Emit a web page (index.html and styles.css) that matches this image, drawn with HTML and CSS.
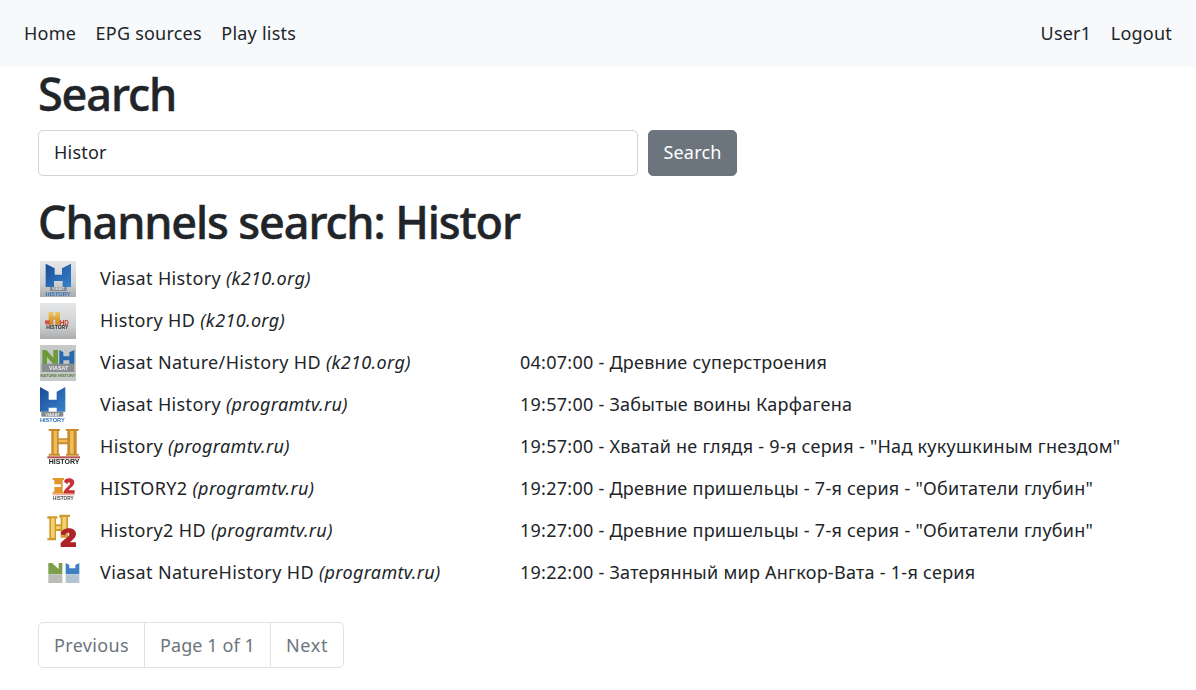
FILE: index.html
```html
<!DOCTYPE html>
<html lang="en">

<head>
    <meta charset="utf-8">
    <title>Channels search</title>
    <link rel="stylesheet" href="styles.css">
</head>

<body>
    <nav class="navbar">
        <div class="nav-group">
            <a class="nav-link" href="#">Home</a>
            <a class="nav-link" href="#">EPG sources</a>
            <a class="nav-link" href="#">Play lists</a>
        </div>
        <div class="nav-group">
            <a class="nav-link" href="#">User1</a>
            <a class="nav-link" href="#">Logout</a>
        </div>
    </nav>

    <main class="container">
        <h1 class="title">Search</h1>
        <form class="search-form">
            <input class="search-input" type="text" value="Histor">
            <button class="search-btn" type="button">Search</button>
        </form>

        <h1 class="title results-title">Channels search: Histor</h1>

        <div class="channels">
            <div class="channel">
                <svg class="logo" viewBox="0 0 132 108">
                    <defs>
                        <linearGradient id="tile" x1="0" y1="0" x2="0" y2="1">
                            <stop offset="0" stop-color="#e6e7e8"/>
                            <stop offset="0.6" stop-color="#d0d1d2"/>
                            <stop offset="1" stop-color="#a9abac"/>
                        </linearGradient>
                        <linearGradient id="blue" x1="0" y1="0" x2="1" y2="1">
                            <stop offset="0" stop-color="#1b4a97"/>
                            <stop offset="1" stop-color="#3583cb"/>
                        </linearGradient>
                        <linearGradient id="gold" x1="0" y1="0" x2="0" y2="1">
                            <stop offset="0" stop-color="#f3c65c"/>
                            <stop offset="1" stop-color="#c98427"/>
                        </linearGradient>
                    </defs>
                    <rect width="108" height="108" fill="url(#tile)"/>
                    <path d="M17 8 L44 22 V41 H66 V22 L93 8 V78 H68 V60 H42 V78 H17 Z" fill="url(#blue)"/>
                    <rect x="30" y="78" width="50" height="12" fill="#85888d"/>
                    <text x="55" y="88" class="logo-text" font-size="10" fill="#e8e8e8">VIASAT</text>
                    <text x="54" y="104" class="logo-text" font-size="17" fill="#2f6fb5">HISTORY</text>
                </svg>
                <div class="channel-name">Viasat History <em>(k210.org)</em></div>
                <div class="channel-now"></div>
            </div>
            <div class="channel">
                <svg class="logo" viewBox="0 0 132 108">
                    <rect width="108" height="108" fill="url(#tile)"/>
                    <path d="M26 27 H40 V40 H46 V27 H60 V65 H46 V50 H40 V65 H26 Z" fill="url(#gold)"/>
                    <rect x="15" y="52" width="14" height="12" fill="#d0564a"/>
                    <text x="73" y="65" class="logo-text" font-size="19" fill="#c9352c">HD</text>
                    <text x="52" y="78" class="logo-text" font-size="15" fill="#2a2a2a">HISTORY</text>
                </svg>
                <div class="channel-name">History HD <em>(k210.org)</em></div>
                <div class="channel-now"></div>
            </div>
            <div class="channel">
                <svg class="logo" viewBox="0 0 132 108">
                    <rect width="108" height="108" fill="#c5c9c8"/>
                    <path d="M7 15 H19 L40 38 V15 H54 V58 H40 L21 36 V58 H7 Z" fill="#6d9a3a"/>
                    <path d="M58 15 L70 22 V34 H88 V22 L103 15 V58 H88 V46 H70 V58 H58 Z" fill="#2868ae"/>
                    <rect x="5" y="56" width="98" height="25" fill="#8b8f92"/>
                    <text x="56" y="74" class="logo-text" font-size="16" fill="#eeeeee">VIASAT</text>
                    <text x="54" y="96" class="logo-text" font-size="12" fill="#56783a">NATURE HISTORY</text>
                </svg>
                <div class="channel-name">Viasat Nature/History HD <em>(k210.org)</em></div>
                <div class="channel-now">04:07:00 - Древние суперстроения</div>
            </div>
            <div class="channel">
                <svg class="logo" viewBox="0 0 132 108">
                    <path d="M0 0 L26 14 V38 H50 V14 L76 0 V74 H50 V62 H26 V74 H0 Z" fill="url(#blue)"/>
                    <rect x="4" y="74" width="66" height="15" fill="#85888d"/>
                    <text x="37" y="86" class="logo-text" font-size="12" fill="#eeeeee">VIASAT</text>
                    <text x="37" y="105" class="logo-text" font-size="17" fill="#2f6fb5">HISTORY</text>
                </svg>
                <div class="channel-name">Viasat History <em>(programtv.ru)</em></div>
                <div class="channel-now">19:57:00 - Забытые воины Карфагена</div>
            </div>
            <div class="channel">
                <svg class="logo" viewBox="0 0 132 108">
                    <path d="M26 0 H60 V6 H56 V28 H82 V6 H78 V0 H116 V6 H110 V74 H116 V80 H78 V74 H82 V46 H56 V74 H60 V80 H26 V74 H34 V6 H26 Z" fill="#c98a2e"/>
                    <path d="M41 6 H51 V74 H41 Z M90 6 H101 V74 H90 Z M56 32 H82 V40 H56 Z" fill="#efbd55"/>
                    <rect x="22" y="82" width="98" height="6" fill="#b5504a"/>
                    <text x="72" y="106" class="logo-text" font-size="21" fill="#222222">HISTORY</text>
                </svg>
                <div class="channel-name">History <em>(programtv.ru)</em></div>
                <div class="channel-now">19:57:00 - Хватай не глядя - 9-я серия - "Над кукушкиным гнездом"</div>
            </div>
            <div class="channel">
                <svg class="logo" viewBox="0 0 132 108">
                    <path d="M38 21 H72 V27 H68 V62 H72 V68 H38 V62 H43 V48 H63 V40 H43 V27 H38 Z" fill="#e2972d"/>
                    <path d="M72 32 C74 18 102 18 103 34 C103 46 90 50 86 58 H104 V68 H72 V60 C78 50 92 42 90 36 C88 32 82 34 82 40 Z" fill="#c62f35"/>
                    <rect x="38" y="68" width="65" height="5" fill="#ecb0a6"/>
                    <text x="70" y="87" class="logo-text" font-size="14" fill="#4a4a4a">HISTORY</text>
                </svg>
                <div class="channel-name">HISTORY2 <em>(programtv.ru)</em></div>
                <div class="channel-now">19:27:00 - Древние пришельцы - 7-я серия - "Обитатели глубин"</div>
            </div>
            <div class="channel">
                <svg class="logo" viewBox="0 0 132 108">
                    <path d="M22 10 H52 V17 H48 V34 H62 V14 H58 V5 H90 V12 H84 V74 H62 V54 H48 V82 H22 V76 H28 V17 H22 Z" fill="#cf9a2c"/>
                    <path d="M33 16 H44 V74 H33 Z M67 12 H79 V68 H67 Z M48 40 H62 V48 H48 Z" fill="#f2d271"/>
                    <path d="M62 64 C64 40 107 40 108 62 C108 76 94 82 90 88 H108 V102 H62 V90 C72 78 90 70 88 62 C86 56 76 58 76 68 Z" fill="#ad2328"/>
                </svg>
                <div class="channel-name">History2 HD <em>(programtv.ru)</em></div>
                <div class="channel-now">19:27:00 - Древние пришельцы - 7-я серия - "Обитатели глубин"</div>
            </div>
            <div class="channel">
                <svg class="logo" viewBox="0 0 132 108">
                    <path d="M25 24 H36 L56 42 V24 H67 V58 H25 Z" fill="#7d9f4a"/>
                    <path d="M77 24 L88 30 V40 H106 V30 L118 24 V58 H77 Z" fill="#3d7fc1"/>
                    <rect x="25" y="58" width="42" height="26" fill="#b9bdb6"/>
                    <rect x="77" y="58" width="41" height="26" fill="#b3c2d0"/>
                </svg>
                <div class="channel-name">Viasat NatureHistory HD <em>(programtv.ru)</em></div>
                <div class="channel-now">19:22:00 - Затерянный мир Ангкор-Вата - 1-я серия</div>
            </div>
        </div>

        <ul class="pagination">
            <li class="page-item"><a href="#">Previous</a></li>
            <li class="page-item page-current"><a href="#">Page 1 of 1</a></li>
            <li class="page-item page-next"><a href="#">Next</a></li>
        </ul>
    </main>
</body>

</html>
```

FILE: styles.css
```css
* {
    box-sizing: border-box;
}

body {
    margin: 0;
    font-family: "Noto Sans", "Open Sans", sans-serif;
    font-size: 18px;
    line-height: 27px;
    color: #212529;
    background-color: #fff;
}

a {
    color: inherit;
    text-decoration: none;
}

.navbar {
    display: flex;
    justify-content: space-between;
    height: 67px;
    padding: 20px 24px;
    background-color: #f8f9fa;
}

.nav-group {
    display: flex;
    gap: 19.5px;
}

.nav-link {
    letter-spacing: 0.22px;
}

.container {
    padding: 0 38px;
}

.title {
    margin: 0 0 9px;
    font-size: 45px;
    line-height: 54px;
    font-weight: 500;
    letter-spacing: -1.13px;
    -webkit-text-stroke: 0.5px #212529;
}

.results-title {
    margin-top: 19px;
}

.search-form {
    display: flex;
    gap: 10px;
}

.search-input {
    width: 600px;
    height: 46px;
    padding: 0 15px 2px;
    border: 1px solid #ced4da;
    border-radius: 5px;
    font: inherit;
    color: #212529;
    letter-spacing: 0.2px;
}

.search-btn {
    width: 89px;
    height: 46px;
    padding: 0 0 2px;
    border: 1px solid #6c757d;
    border-radius: 5px;
    background-color: #6c757d;
    color: #fff;
    font: inherit;
    letter-spacing: 0.2px;
}

.channel {
    display: flex;
    align-items: center;
    height: 42px;
}

.logo {
    flex: none;
    width: 44px;
    height: 36px;
    margin-left: 2px;
    margin-right: 16px;
    filter: blur(0.5px);
}

.logo-text {
    font-family: "Liberation Sans", sans-serif;
    font-weight: 700;
    text-anchor: middle;
}

.channel-name {
    flex: none;
    width: 420px;
    margin-bottom: 2px;
    letter-spacing: 0.35px;
}

.channel-now {
    margin-bottom: 2px;
    letter-spacing: 0.26px;
}

.pagination {
    display: inline-flex;
    margin: 28px 0 0;
    padding: 0;
    list-style: none;
    border: 1px solid #dee2e6;
    border-radius: 5px;
    color: #6c757d;
    letter-spacing: 0.35px;
}

.page-item a {
    display: block;
    height: 44px;
    padding: 9px 15px 8px;
}

.page-item + .page-item {
    border-left: 1px solid #dee2e6;
}

.page-current {
    letter-spacing: 0.1px;
}

.page-next {
    letter-spacing: 0.65px;
}
```
